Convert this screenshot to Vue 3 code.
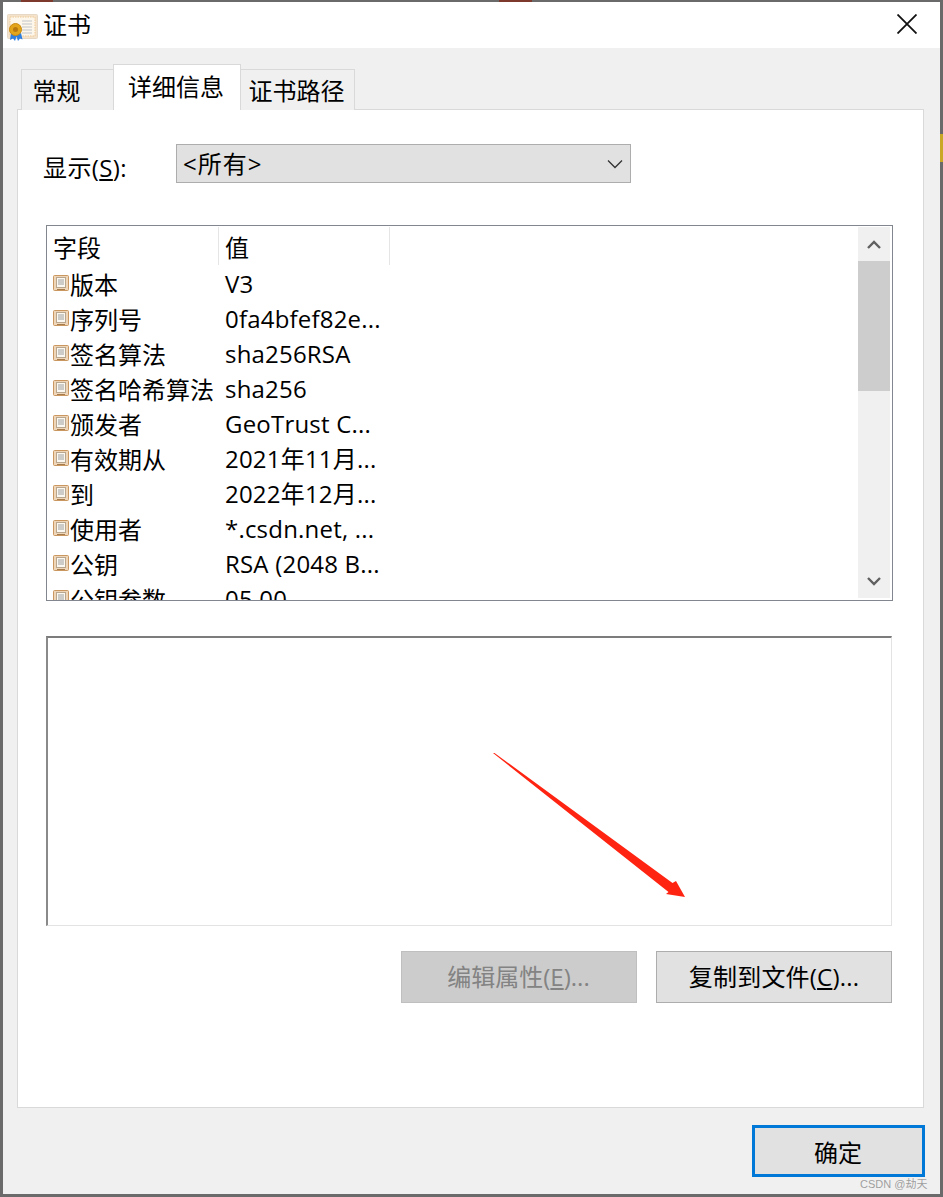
<script setup>
const rows = [
  ['版本', 'V3'],
  ['序列号', '0fa4bfef82e...'],
  ['签名算法', 'sha256RSA'],
  ['签名哈希算法', 'sha256'],
  ['颁发者', 'GeoTrust C...'],
  ['有效期从', '2021年11月...'],
  ['到', '2022年12月...'],
  ['使用者', '*.csdn.net, ...'],
  ['公钥', 'RSA (2048 B...'],
  ['公钥参数', '05 00']
]
</script>

<template>
  <div class="screen">
    <i class="spot spot-a"></i>
    <i class="spot spot-b"></i>
    <i class="spot spot-c"></i>
    <div class="window">
      <header class="titlebar">
        <svg class="cert" width="31" height="27" viewBox="0 0 31 27">
          <rect x="0.5" y="0.5" width="30" height="24" rx="1" fill="#f4e3ca" stroke="#e6d8c4" />
          <rect x="3" y="3" width="25" height="19" fill="#fdf6ea" stroke="#edc998" stroke-dasharray="1.500 1" />
          <path d="M15 7h10M15 10h10M15 13h10M15 16h10M15 19h10" stroke="#d6d6d6" stroke-width="1.400" />
          <path d="M4 19l-1 7 3-1.500L8 27l2-6zM9 21l2 6 2-2.500 2.500 1L14 19z" fill="#2f7fe0" />
          <circle cx="8.500" cy="15.500" r="6" fill="#e3a51c" stroke="#c98a10" />
          <circle cx="8.500" cy="15.500" r="2.500" fill="#b87a10" />
        </svg>
        <span class="title">证书</span>
        <svg class="close" width="20" height="20" viewBox="0 0 20 20">
          <path d="M0.500 0.500L19.500 19.500M19.500 0.500L0.500 19.500" stroke="#111" stroke-width="1.800" fill="none" />
        </svg>
      </header>

      <main class="body">
        <nav class="tabs">
          <div class="tab tab-first">常规</div>
          <div class="tab tab-active">详细信息</div>
          <div class="tab tab-last">证书路径</div>
        </nav>

        <section class="panel">
          <div class="show-row">
            <label class="show-label">显示(<u>S</u>):</label>
            <div class="combo">
              <span class="combo-text">&lt;所有&gt;</span>
              <svg width="16" height="10" viewBox="0 0 16 10">
                <path d="M1 1.500L8 8.500L15 1.500" stroke="#333" stroke-width="1.300" fill="none" />
              </svg>
            </div>
          </div>

          <div class="list">
            <div class="list-main">
              <div class="list-head">
                <div class="head-cell head-field">字段</div>
                <div class="head-cell head-value">值</div>
              </div>
              <div v-for="row in rows" :key="row[0]" class="list-row">
                <div class="cell-field">
                  <svg class="row-icon" width="16" height="17" viewBox="0 0 16 17">
                    <rect x="0.500" y="0.500" width="15" height="15" rx="1" fill="#f0d6b8" stroke="#c9975f" />
                    <rect x="3.500" y="2.500" width="9" height="10" fill="#fbf7f1" stroke="#b9a68e" />
                    <path d="M5 5h6M5 7h6M5 9h6" stroke="#a0a0a0" />
                    <path d="M4 14.500h8" stroke="#a77c4c" />
                  </svg>
                  <span>{{ row[0] }}</span>
                </div>
                <div class="cell-value">{{ row[1] }}</div>
              </div>
            </div>
            <div class="scrollbar">
              <div class="scroll-btn">
                <svg width="14" height="9" viewBox="0 0 14 9">
                  <path d="M1 8L7 2L13 8" stroke="#606060" stroke-width="2.400" fill="none" />
                </svg>
              </div>
              <div class="scroll-track"><div class="scroll-thumb"></div></div>
              <div class="scroll-btn">
                <svg width="14" height="9" viewBox="0 0 14 9">
                  <path d="M1 1L7 7L13 1" stroke="#606060" stroke-width="2.400" fill="none" />
                </svg>
              </div>
            </div>
          </div>

          <div class="detail"></div>

          <div class="actions">
            <button class="btn btn-disabled" disabled>编辑属性(<u>E</u>)...</button>
            <button class="btn btn-copy">复制到文件(<u>C</u>)...</button>
          </div>
        </section>

        <footer class="footer">
          <button class="btn btn-ok">确定</button>
        </footer>
      </main>
    </div>

    <svg class="arrow" width="943" height="1197" viewBox="0 0 943 1197">
      <polygon points="493,753 494.500,753 672.500,883 676,881 685,897 666,894 668.500,892" fill="#ff2412" />
    </svg>
    <div class="watermark">CSDN @劫天</div>
  </div>
</template>

<style>
html, body { margin: 0; background: #6a6a6a; }
</style>

<style scoped>
.screen {
  position: relative;
  width: 943px;
  height: 1197px;
  box-sizing: border-box;
  padding: 2px 3px 3px 3px;
  background: #6a6a6a;
  overflow: hidden;
  font-family: "Open Sans", "Noto Sans CJK SC", sans-serif;
  font-size: 24px;
  color: #000;
}
.spot { position: absolute; display: block; }
.spot-a { left: 21px; top: 0; width: 32px; height: 2px; background: #7d3a2c; }
.spot-b { left: 499px; top: 0; width: 33px; height: 2px; background: #7d3a2c; }
.spot-c { left: 940px; top: 134px; width: 3px; height: 28px; background: #c9a826; }

.window {
  height: 100%;
  display: flex;
  flex-direction: column;
  background: #f0f0f0;
}
.titlebar {
  height: 46px;
  flex: none;
  background: #fff;
  display: flex;
  align-items: center;
  padding: 0 23px 0 4px;
}
.cert { margin-top: 4px; flex: none; }
.title { margin-left: 5px; line-height: 44px; }
.close { margin-left: auto; flex: none; margin-top: -2px; }

.body {
  flex: 1;
  display: flex;
  flex-direction: column;
  padding: 17px 16px 0 14px;
}
.tabs {
  height: 45px;
  display: flex;
  align-items: flex-end;
  padding-left: 4px;
  margin-bottom: -1px;
  position: relative;
  z-index: 1;
}
.tab {
  box-sizing: border-box;
  height: 41px;
  background: #f0f0f0;
  border: 1px solid #d9d9d9;
  border-bottom: none;
  text-align: center;
  line-height: 42px;
}
.tab-first { width: 92px; border-right: none; padding-right: 22px; }
.tab-active {
  width: 128px;
  height: 46px;
  background: #fff;
  line-height: 44px;
  padding-bottom: 2px;
  padding-right: 2px;
}
.tab-last { width: 114px; border-left: none; padding-right: 2px; }

.panel {
  box-sizing: border-box;
  height: 999px;
  flex: none;
  background: #fff;
  border: 1px solid #d9d9d9;
  padding: 34px 30px 0 28px;
}
.show-row { display: flex; align-items: center; height: 39px; }
.show-label { width: 133px; margin-left: -3px; padding-top: 8px; line-height: 40px; flex: none; letter-spacing: 0.4px; }
.combo {
  box-sizing: border-box;
  width: 455px;
  height: 39px;
  background: #e1e1e1;
  border: 1px solid #adadad;
  display: flex;
  align-items: center;
  justify-content: space-between;
  padding: 0 7px 0 6px;
  line-height: 36px;
}
.combo-text { letter-spacing: 1px; }

.list {
  box-sizing: border-box;
  height: 376px;
  margin-top: 42px;
  border: 1px solid #82878f;
  display: flex;
  overflow: hidden;
}
.list-main { flex: 1; min-width: 0; overflow: hidden; }
.list-head { display: flex; height: 41px; }
.head-cell {
  box-sizing: border-box;
  height: 38px;
  margin-top: 1px;
  border-right: 1px solid #e5e5e5;
  line-height: 42px;
}
.head-field { width: 172px; padding-left: 6px; }
.head-value { width: 171px; padding-left: 6px; }
.list-row { display: flex; height: 35px; line-height: 34px; white-space: nowrap; }
.cell-field { width: 172px; display: flex; align-items: center; padding-left: 6px; box-sizing: border-box; flex: none; }
.row-icon { flex: none; margin-right: 1px; margin-top: -3px; }
.cell-value { padding-left: 6px; letter-spacing: 0.2px; }

.scrollbar {
  width: 32px;
  flex: none;
  margin: 1px 2px 2px 0;
  background: #f0f0f0;
  display: flex;
  flex-direction: column;
}
.scroll-btn { height: 34px; flex: none; display: flex; align-items: center; justify-content: center; }
.scroll-track { flex: 1; }
.scroll-thumb { height: 130px; background: #cdcdcd; }

.detail {
  box-sizing: border-box;
  width: 846px;
  height: 290px;
  margin-top: 35px;
  background: #fff;
  border-style: solid;
  border-width: 2px 1px 1px 2px;
  border-color: #7c7c7c #e3e3e3 #e3e3e3 #8a8a8a;
}

.actions {
  display: flex;
  justify-content: flex-end;
  gap: 19px;
  margin: 25px 1px 0 0;
}
.btn {
  box-sizing: border-box;
  width: 236px;
  height: 52px;
  padding: 0;
  background: #e1e1e1;
  border: 1px solid #adadad;
  font: inherit;
  color: #000;
  line-height: 50px;
}
.btn-disabled { background: #cccccc; border-color: #bfbfbf; color: #838383; padding-right: 1px; }
.btn-copy { letter-spacing: 0.2px; }

.footer { display: flex; justify-content: flex-end; margin: 17px -1px 0 0; }
.btn-ok { width: 173px; border: 3px solid #0078d7; padding-right: 1px; background: #e1e1e1; }

.arrow { position: absolute; left: 0; top: 0; pointer-events: none; }
.watermark {
  position: absolute;
  left: 860px;
  top: 1175px;
  font: 11px "Liberation Sans", "Noto Sans CJK SC", sans-serif;
  color: rgba(120, 120, 120, 0.7);
  white-space: nowrap;
}
</style>
